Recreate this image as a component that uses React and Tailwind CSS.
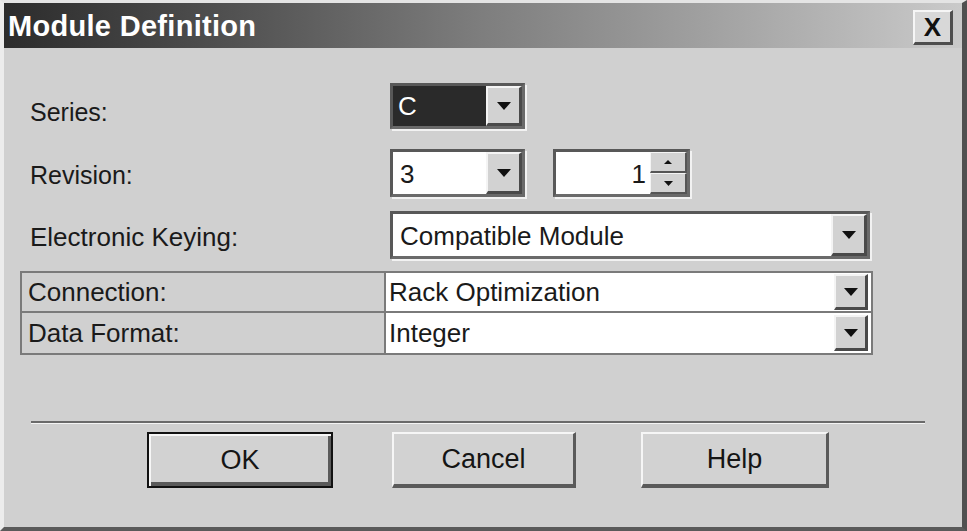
import React from "react";

const font = { fontFamily: '"Liberation Sans", Arial, sans-serif' };

function Arrow({ small }) {
  return small ? (
    <svg width="9" height="5" viewBox="0 0 9 5"><path d="M0 0H9L4.5 5Z" fill="#111" /></svg>
  ) : (
    <svg width="14" height="8" viewBox="0 0 14 8"><path d="M0 0H14L7 8Z" fill="#111" /></svg>
  );
}

function DropBtn({ className = "" }) {
  return (
    <div
      className={
        "flex items-center justify-center bg-[#d2d2d2] border-t-2 border-l-2 border-t-[#f4f4f4] border-l-[#f4f4f4] border-b-[3px] border-r-[3px] border-b-[#4a4a4a] border-r-[#4a4a4a] " +
        className
      }
    >
      <Arrow />
    </div>
  );
}

function Sunken({ className = "", children }) {
  return (
    <div
      className={
        "flex border-[3px] border-t-[#585858] border-l-[#585858] border-b-[#6a6a6a] border-r-[#6a6a6a] shadow-[2px_2px_0_#f2f2f2] bg-white " +
        className
      }
    >
      {children}
    </div>
  );
}

function Button({ children, def }) {
  return (
    <div
      className={
        "flex items-center justify-center h-[56px] bg-[#d2d2d2] text-[27px] text-[#151515] " +
        (def
          ? "border-2 border-[#111] shadow-[inset_2px_2px_0_#f6f6f6,inset_-3px_-4px_0_#5a5a5a]"
          : "border-t-2 border-l-2 border-t-[#f6f6f6] border-l-[#f6f6f6] border-b-[4px] border-r-[3px] border-b-[#5a5a5a] border-r-[#5a5a5a]")
      }
    >
      {children}
    </div>
  );
}

export default function App() {
  return (
    <div
      style={font}
      className="w-[967px] h-[531px] flex flex-col bg-[#d0d0d0] border-t-[3px] border-t-[#e4e4e4] border-l-[4px] border-l-[#ececec] border-r-[5px] border-r-[#505050] border-b-[4px] border-b-[#5a5a5a] text-[#1a1a1a] overflow-hidden"
    >
      {/* Title bar */}
      <div className="h-[45px] flex items-center justify-between pl-[4px] pr-[9px] bg-gradient-to-r from-[#2c2c2c] via-[#7e7e7e] to-[#cacaca]">
        <span className="text-white font-bold text-[29px] tracking-[0.3px] mt-[2px]">Module Definition</span>
        <div className="w-[40px] h-[35px] mb-[-3px] flex items-center justify-center bg-[#d8d8d8] border-t-2 border-l-2 border-t-[#f6f6f6] border-l-[#f6f6f6] border-b-[3px] border-r-[3px] border-b-[#4e4e4e] border-r-[#4e4e4e]">
          <span className="font-bold text-[26px] text-[#111] leading-none">X</span>
        </div>
      </div>

      {/* Body */}
      <div className="flex flex-col pl-[16px] pr-[37px]">
        {/* Series */}
        <div className="flex items-center mt-[35px] h-[46px]">
          <span className="w-[370px] pl-[10px] pt-[14px] text-[25px]">Series:</span>
          <Sunken className="w-[135px] h-[46px] bg-[#d0d0d0]">
            <div className="flex-1 bg-[#2a2a2a] text-white text-[26px] flex items-center pl-[5px]">C</div>
            <DropBtn className="w-[36px]" />
          </Sunken>
        </div>

        {/* Revision */}
        <div className="flex items-center mt-[20px] h-[48px]">
          <span className="w-[370px] pl-[10px] pt-[6px] text-[25px]">Revision:</span>
          <Sunken className="w-[135px] h-[48px]">
            <div className="flex-1 text-[26px] flex items-center pl-[7px] pt-[2px]">3</div>
            <DropBtn className="w-[36px]" />
          </Sunken>
          <Sunken className="ml-[28px] w-[137px] h-[48px]">
            <div className="flex-1 text-[26px] flex items-center justify-end pr-[4px] pt-[2px]">1</div>
            <div className="w-[37px] flex flex-col">
              <div className="flex-1 flex items-center justify-center bg-[#d2d2d2] border-t border-l border-t-[#f4f4f4] border-l-[#f4f4f4] border-b-2 border-r-2 border-b-[#555] border-r-[#555]">
                <svg width="8" height="4" viewBox="0 0 8 4"><path d="M0 4H8L4 0Z" fill="#111" /></svg>
              </div>
              <div className="flex-1 flex items-center justify-center bg-[#d2d2d2] border-t border-l border-t-[#f4f4f4] border-l-[#f4f4f4] border-b-2 border-r-2 border-b-[#555] border-r-[#555]">
                <Arrow small />
              </div>
            </div>
          </Sunken>
        </div>

        {/* Electronic Keying */}
        <div className="flex items-center mt-[14px] h-[48px]">
          <span className="w-[370px] pl-[10px] pt-[5px] text-[26px]">Electronic Keying:</span>
          <Sunken className="w-[480px] h-[48px]">
            <div className="flex-1 text-[26px] flex items-center pl-[7px] pt-[2px]">Compatible Module</div>
            <DropBtn className="w-[36px]" />
          </Sunken>
        </div>

        {/* Table */}
        <div className="mt-[12px] w-[853px] border-2 border-[#7a7a7a] flex flex-col">
          {[
            ["Connection:", "Rack Optimization"],
            ["Data Format:", "Integer"],
          ].map(([l, v], i) => (
            <div key={l} className={"flex h-[40px] " + (i === 0 ? "border-b-2 border-b-[#7a7a7a]" : "")}>
              <div className="w-[364px] border-r-2 border-r-[#7a7a7a] flex items-center pl-[6px] text-[26px]">{l}</div>
              <div className="flex-1 bg-white flex items-center">
                <span className="flex-1 pl-[3px] text-[26px]">{v}</span>
                <DropBtn className="w-[34px] h-[36px] mr-[3px]" />
              </div>
            </div>
          ))}
        </div>

        {/* Separator */}
        <div className="mt-[66px] ml-[11px] border-t-2 border-t-[#6a6a6a] border-b border-b-[#f4f4f4]"></div>

        {/* Buttons */}
        <div className="flex mt-[8px] pl-[127px]">
          <div className="w-[186px]"><Button def>OK</Button></div>
          <div className="w-[184px] ml-[59px]"><Button>Cancel</Button></div>
          <div className="w-[188px] ml-[65px]"><Button>Help</Button></div>
        </div>
      </div>
    </div>
  );
}
